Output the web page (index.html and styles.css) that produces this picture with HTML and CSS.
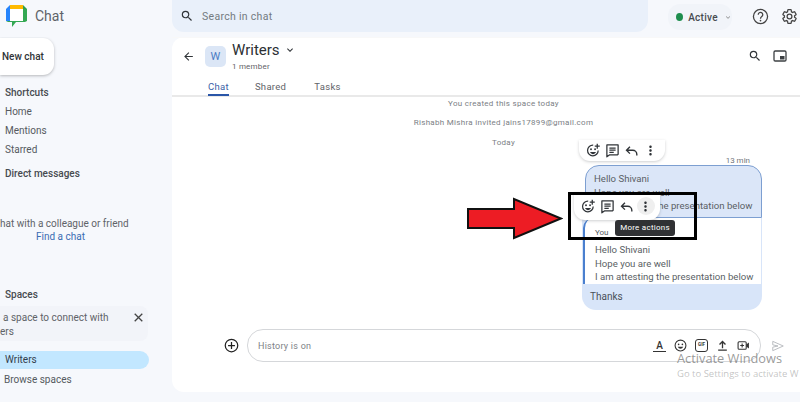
FILE: index.html
```html
<!DOCTYPE html>
<html lang="en">
<head>
    <meta charset="UTF-8">
    <title>Chat</title>
    <link rel="stylesheet" href="styles.css">
</head>
<body>
    <!-- Shared icons -->
    <svg class="sprite" width="0" height="0">
        <symbol id="i-search" viewBox="0 0 24 24"><path d="M15.5 14h-.79l-.28-.27A6.471 6.471 0 0 0 16 9.5 6.5 6.5 0 1 0 9.5 16c1.61 0 3.09-.59 4.23-1.57l.27.28v.79l5 4.99L20.49 19l-4.99-5zm-6 0C7.01 14 5 11.99 5 9.5S7.01 5 9.5 5 14 7.01 14 9.5 11.99 14 9.5 14z"/></symbol>
        <symbol id="i-chevron" viewBox="0 0 24 24"><path d="M7.41 8.59 12 13.17l4.59-4.58L18 10l-6 6-6-6z"/></symbol>
        <symbol id="i-react" viewBox="0 0 24 24"><path d="M19.500 12a8.500 8.500 0 1 1-8-8.500" fill="none" stroke="currentColor" stroke-width="2"/><circle cx="8" cy="10" r="1.500"/><circle cx="14.500" cy="10" r="1.500"/><path d="M6.500 14.500c1 2.200 2.800 3.300 4.700 3.300s3.700-1.100 4.700-3.300z"/><path d="M19 1v3h3v2h-3v3h-2V6h-3V4h3V1z"/></symbol>
        <symbol id="i-thread" viewBox="0 0 24 24"><path d="M3 3h18v15l-1 1H7l-4 3z" fill="none" stroke="currentColor" stroke-width="2" stroke-linejoin="round"/><path d="M7 7h10v2H7zM7 10.500h10v2H7zM7 14h7v2H7z"/></symbol>
        <symbol id="i-reply" viewBox="0 0 24 24"><path d="M9.500 6 4 11.500 9.500 17M4 11.500h10a6.500 6.500 0 0 1 6.500 6.500v2" fill="none" stroke="currentColor" stroke-width="2.200"/></symbol>
        <symbol id="i-more" viewBox="0 0 24 24"><path d="M12 8c1.100 0 2-.9 2-2s-.9-2-2-2-2 .9-2 2 .9 2 2 2zm0 2c-1.100 0-2 .9-2 2s.9 2 2 2 2-.9 2-2-.9-2-2-2zm0 6c-1.100 0-2 .9-2 2s.9 2 2 2 2-.9 2-2-.9-2-2-2z"/></symbol>
    </svg>

    <header class="topbar">
        <div class="brand">
            <svg class="logo" viewBox="0 0 21 22">
                <path d="M0 4 4 0v16H0z" fill="#2684fc"/>
                <path d="M4 0h13v4H4z" fill="#ffba00"/>
                <path d="M17 0l4 4v4h-4z" fill="#2f9e4f"/>
                <path d="M17 4h4v12l-2 1H10l-4 5v-5H2L0 16h17z" fill="#34a853"/>
                <path d="M4 4h13v12H4z" fill="#fff"/>
            </svg>
            <span class="brand-name">Chat</span>
        </div>
        <div class="search">
            <svg class="icon-search"><use href="#i-search"/></svg>
            <span>Search in chat</span>
        </div>
        <div class="status">
            <span class="dot"></span>
            <span>Active</span>
            <svg class="status-caret"><use href="#i-chevron"/></svg>
        </div>
        <svg class="top-icon" viewBox="0 0 24 24">
            <circle cx="12" cy="12" r="10" fill="none" stroke="#444" stroke-width="1.800"/>
            <path d="M8.800 9.500a3.200 3.200 0 1 1 5 2.600c-1.200.9-1.800 1.400-1.800 3" fill="none" stroke="#444" stroke-width="1.800"/>
            <circle cx="12" cy="17.800" r="1.200" fill="#444"/>
        </svg>
        <svg class="top-icon gear" viewBox="0 0 24 24">
            <path d="M19.140 12.940c.04-.3.06-.61.06-.94 0-.32-.02-.64-.07-.94l2.030-1.580c.18-.14.23-.41.12-.61l-1.920-3.320c-.12-.22-.37-.29-.59-.22l-2.390.96c-.5-.38-1.030-.7-1.620-.94l-.36-2.540c-.04-.24-.24-.41-.48-.41h-3.840c-.24 0-.43.17-.47.41l-.36 2.540c-.59.24-1.130.57-1.620.94l-2.390-.96c-.22-.08-.47 0-.59.22L2.740 8.870c-.12.21-.08.47.12.61l2.030 1.580c-.05.3-.09.63-.09.94s.02.64.07.94l-2.030 1.580c-.18.14-.23.41-.12.61l1.920 3.320c.12.22.37.29.59.22l2.390-.96c.5.38 1.030.7 1.620.94l.36 2.540c.05.24.24.41.48.41h3.840c.24 0 .44-.17.47-.41l.36-2.540c.59-.24 1.130-.56 1.620-.94l2.390.96c.22.08.47 0 .59-.22l1.920-3.320c.12-.22.07-.47-.12-.61l-2.010-1.580z" fill="none" stroke="#444" stroke-width="1.800"/>
            <circle cx="12" cy="12" r="3.400" fill="none" stroke="#444" stroke-width="1.800"/>
        </svg>
    </header>

    <div class="layout">
        <!-- Sidebar, the screenshot is cropped at its left edge -->
        <aside class="sidebar">
            <button class="new-chat">New chat</button>
            <h2 class="side-title first">Shortcuts</h2>
            <a class="side-link">Home</a>
            <a class="side-link">Mentions</a>
            <a class="side-link">Starred</a>
            <h2 class="side-title dm">Direct messages</h2>
            <div class="dm-empty">
                <p>hat with a colleague or friend</p>
                <p class="find">Find a chat</p>
            </div>
            <h2 class="side-title spaces">Spaces</h2>
            <div class="notice">
                <p class="notice-line">a space to connect with</p>
                <p class="notice-end">ers</p>
                <svg class="notice-close" viewBox="0 0 24 24"><path d="M5 5l14 14M19 5 5 19" stroke="#444" stroke-width="2.400" fill="none"/></svg>
            </div>
            <a class="space-row selected">Writers</a>
            <a class="space-row">Browse spaces</a>
        </aside>

        <main class="panel">
            <div class="chat-head">
                <svg class="back" viewBox="0 0 24 24"><path d="M20 11H7.830l5.590-5.590L12 4l-8 8 8 8 1.410-1.410L7.830 13H20v-2z"/></svg>
                <div class="avatar">W</div>
                <div class="head-text">
                    <div class="room">Writers <svg class="room-caret"><use href="#i-chevron"/></svg></div>
                    <div class="members">1 member</div>
                </div>
                <svg class="head-search"><use href="#i-search"/></svg>
                <svg class="pip" viewBox="0 0 14 12"><rect x="1" y="1" width="12" height="10" rx="1.200" fill="none" stroke="#3c4043" stroke-width="1.300"/><rect x="7" y="6" width="4.500" height="3.500" fill="#3c4043"/></svg>
            </div>
            <nav class="tabs">
                <a class="tab active">Chat</a>
                <a class="tab">Shared</a>
                <a class="tab">Tasks</a>
            </nav>

            <section class="thread">
                <p class="sys">You created this space today</p>
                <p class="sys invited">Rishabh Mishra invited jains17899@gmail.com</p>
                <p class="sys day">Today</p>

                <div class="messages">
                    <div class="toolbar tb-back">
                        <svg><use href="#i-react"/></svg>
                        <svg><use href="#i-thread"/></svg>
                        <svg><use href="#i-reply"/></svg>
                        <span class="more-slot"><svg><use href="#i-more"/></svg></span>
                    </div>
                    <div class="time">13 min</div>
                    <div class="bubble original">
                        <p>Hello Shivani</p>
                        <p>Hope you are well</p>
                        <p>I am attesting the presentation below</p>
                    </div>
                    <div class="quote-card">
                        <div class="quote">
                            <div class="you">You</div>
                            <p>Hello Shivani</p>
                            <p>Hope you are well</p>
                            <p>I am attesting the presentation below</p>
                        </div>
                        <div class="reply-text">Thanks</div>
                    </div>
                    <div class="toolbar tb-front">
                        <svg><use href="#i-react"/></svg>
                        <svg><use href="#i-thread"/></svg>
                        <svg><use href="#i-reply"/></svg>
                        <span class="more-slot hovered"><svg><use href="#i-more"/></svg></span>
                    </div>
                    <div class="tooltip">More actions</div>
                </div>
            </section>

            <div class="composer">
                <svg class="add" viewBox="0 0 24 24"><circle cx="12" cy="12" r="10" fill="none" stroke="#222" stroke-width="2"/><path d="M12 6.500v11M6.500 12h11" stroke="#222" stroke-width="2"/></svg>
                <div class="input">
                    <span class="placeholder">History is on</span>
                    <div class="input-icons">
                        <span class="format">A</span>
                        <svg viewBox="0 0 24 24"><circle cx="12" cy="12" r="10" fill="none" stroke="#333" stroke-width="2"/><circle cx="8.500" cy="10" r="1.500" fill="#333"/><circle cx="15.500" cy="10" r="1.500" fill="#333"/><path d="M7 14.500h10c-1 2.500-3 3.500-5 3.500s-4-1-5-3.500z" fill="#333"/></svg>
                        <span class="gif">GIF</span>
                        <svg viewBox="0 0 24 24"><path d="M12 17V5M6.500 10 12 4.500 17.500 10M4 20.500h16" fill="none" stroke="#333" stroke-width="2.400"/></svg>
                        <svg viewBox="0 0 24 24"><rect x="2" y="5" width="15" height="14" rx="2" fill="none" stroke="#333" stroke-width="2"/><path d="M9.500 8.500v7M6 12h7" stroke="#333" stroke-width="2"/><path d="M17 10l5-3.500v11L17 14z" fill="#333"/></svg>
                    </div>
                </div>
                <svg class="send" viewBox="0 0 24 24"><path d="M3 4l18 8-18 8v-6l9-2-9-2z" fill="none" stroke="#b5b8bc" stroke-width="1.600" stroke-linejoin="round"/></svg>
            </div>
        </main>
    </div>

    <!-- Annotations drawn over the screenshot -->
    <div class="callout"></div>
    <svg class="arrow" viewBox="0 0 96 43"><path d="M1 12h46V2l47 19.500L47 41V31H1z" fill="#ed1c24" stroke="#111" stroke-width="2"/></svg>
    <div class="watermark">
        <div class="wm-title">Activate Windows</div>
        <div class="wm-sub">Go to Settings to activate W</div>
    </div>
</body>
</html>
```

FILE: styles.css
```css
/* Basic Reset */
* {
    margin: 0;
    padding: 0;
    box-sizing: border-box;
}

body {
    font-family: 'Roboto', 'Liberation Sans', sans-serif;
    width: 800px;
    height: 402px;
    overflow: hidden;
    position: relative;
    background: #f6f8fc;
    color: #3c4043;
    font-size: 10px;
}

.sprite {
    position: absolute;
}

/* Top Bar */
.topbar {
    display: flex;
    align-items: flex-start;
    height: 37px;
}

.brand {
    display: flex;
    align-items: center;
    gap: 8px;
    width: 172px;
    height: 32px;
    padding-left: 6px;
}

.logo {
    width: 21px;
    height: 22px;
}

.brand-name {
    font-size: 14px;
    color: #5f6368;
}

.search {
    display: flex;
    align-items: center;
    gap: 8px;
    width: 476px;
    height: 32px;
    padding-left: 8px;
    background: #e9f0fa;
    border-radius: 0 0 12px 12px;
    font-size: 10.5px;
    letter-spacing: 0.3px;
    color: #737a80;
}

.icon-search {
    width: 14px;
    height: 14px;
    fill: #303438;
}

.status {
    display: flex;
    align-items: center;
    gap: 5px;
    width: 64px;
    height: 26px;
    margin: 4px 0 0 20px;
    padding-left: 8px;
    background: #f1f4f9;
    border-radius: 12px;
    font-size: 10px;
    font-weight: 500;
    letter-spacing: 0.3px;
    color: #474b50;
}

.dot {
    width: 8px;
    height: 8px;
    border-radius: 50%;
    background: #1e8e4e;
}

.status-caret {
    width: 9px;
    height: 9px;
    fill: #777;
    margin-left: 1px;
}

.top-icon {
    width: 17px;
    height: 17px;
    margin: 8px 0 0 20px;
}

.top-icon.gear {
    margin-left: 12px;
}

/* Layout */
.layout {
    display: flex;
    height: 355px;
}

/* Sidebar */
.sidebar {
    width: 172px;
    flex-shrink: 0;
    overflow: hidden;
    font-size: 10px;
}

.new-chat {
    display: block;
    width: 54px;
    height: 37px;
    margin-top: 1px;
    padding-left: 2px;
    border: none;
    border-radius: 0 11px 11px 0;
    background: #fff;
    box-shadow: 0 1px 3px rgba(60, 64, 67, 0.35);
    font-family: inherit;
    font-size: 10px;
    font-weight: 500;
    text-align: left;
    color: #303438;
}

.side-title {
    font-size: 10px;
    font-weight: 500;
    color: #474b50;
    padding-left: 5px;
    line-height: 14px;
}

.side-title.first {
    margin-top: 11px;
}

.side-title.dm {
    margin-top: 10px;
}

.side-title.spaces {
    margin-top: 45px;
}

.side-link {
    display: block;
    padding-left: 5px;
    margin-top: 5px;
    line-height: 14px;
    color: #555a60;
}

.dm-empty {
    margin-top: 36px;
    line-height: 13px;
    color: #5f6368;
    white-space: nowrap;
}

.find {
    padding-left: 36px;
    color: #3a6cb3;
}

.notice {
    margin-top: 4px;
    width: 148px;
    height: 35px;
    padding-top: 5px;
    background: #f2f4f9;
    border-radius: 0 8px 8px 0;
    position: relative;
    line-height: 14px;
    color: #5f6368;
}

.notice-line {
    padding-left: 3px;
}

.notice-close {
    position: absolute;
    top: 5px;
    right: 3px;
    width: 13px;
    height: 13px;
}

.space-row {
    display: block;
    width: 149px;
    height: 18px;
    line-height: 18px;
    padding-left: 5px;
    margin-top: 10px;
    color: #555a60;
}

.space-row.selected {
    background: #c2e7ff;
    border-radius: 0 9px 9px 0;
    color: #33404d;
}

.space-row + .space-row {
    margin-top: 2px;
    padding-left: 4px;
}

/* Main Panel */
.panel {
    flex: 1;
    height: 355px;
    background: #fff;
    border-radius: 12px 0 0 12px;
    display: flex;
    flex-direction: column;
}

.chat-head {
    display: flex;
    align-items: flex-start;
    height: 41px;
    padding-left: 10px;
    border-top: 1px solid #f8f8f8;
}

.back {
    width: 13px;
    height: 13px;
    margin-top: 12px;
    fill: #303438;
}

.avatar {
    width: 21px;
    height: 21px;
    margin: 8px 0 0 10px;
    border-radius: 5px;
    background: #dbe6f6;
    color: #4a7cc4;
    font-size: 11px;
    line-height: 21px;
    text-align: center;
}

.head-text {
    margin-left: 6px;
}

.room {
    display: flex;
    align-items: center;
    gap: 4px;
    height: 24px;
    font-size: 15px;
    color: #2c2f33;
}

.room-caret {
    width: 12px;
    height: 12px;
    fill: #303438;
}

.members {
    font-size: 8px;
    letter-spacing: 0.2px;
    line-height: 10px;
    color: #5f6368;
}

.head-search {
    width: 14px;
    height: 14px;
    margin: 11px 0 0 auto;
    fill: #303438;
}

.pip {
    width: 14px;
    height: 12px;
    margin: 12px 13px 0 11px;
}

.tabs {
    display: flex;
    height: 19px;
    padding-left: 36px;
    gap: 26px;
    border-bottom: 2px solid #e9e9e9;
    font-size: 9.5px;
    letter-spacing: 0.3px;
    line-height: 17px;
    color: #5f6368;
}

.tab:nth-child(3) {
    margin-left: 2px;
}

.tab.active {
    color: #3a5fa8;
    height: 18px;
    border-bottom: 2px solid #2a56a8;
}

/* Thread */
.thread {
    flex: 1;
    position: relative;
    display: flex;
    flex-direction: column;
    padding-top: 1px;
}

.sys {
    padding-left: 35px;
    text-align: center;
    font-size: 8px;
    letter-spacing: 0.3px;
    line-height: 12px;
    color: #7b8085;
}

.sys.invited {
    margin-top: 7px;
}

.sys.day {
    margin-top: 8px;
}

.messages {
    position: relative;
    align-self: flex-end;
    width: 180px;
    margin-right: 38px;
    margin-top: 6px;
}

.time {
    height: 12px;
    padding-right: 12px;
    text-align: right;
    font-size: 8px;
    line-height: 12px;
    color: #70757a;
}

.messages p {
    line-height: 13.5px;
    font-size: 9.6px;
    color: #5a5f65;
    white-space: nowrap;
}

.bubble.original {
    width: 177px;
    height: 53px;
    margin: -2px 0 0 3px;
    padding: 6px 0 0 8px;
    background: #dbe6f8;
    border: 1px solid #7d9fd1;
    border-radius: 14px 14px 0 0;
}

.quote-card {
    width: 180px;
    height: 92px;
    background: #d8e5f9;
    border-radius: 0 0 14px 14px;
}

.quote {
    height: 66px;
    padding: 9px 0 0 10px;
    background: #fff;
    border-left: 2px solid #4a80cf;
    border-top-left-radius: 10px;
    margin: 0 1px;
}

.you {
    font-size: 8px;
    line-height: 12px;
    margin-bottom: 4px;
    color: #555a60;
}

.reply-text {
    padding: 7px 0 0 8px;
    color: #4a5058;
}

/* Message toolbars, they float over the bubbles */
.toolbar {
    position: absolute;
    display: flex;
    align-items: center;
    gap: 4px;
    width: 86px;
    height: 21px;
    padding-left: 7px;
    background: #fff;
    border-radius: 0 0 11px 11px;
    box-shadow: 0 1px 3px rgba(60, 64, 67, 0.25);
    color: #303438;
}

.toolbar svg {
    display: block;
    width: 15px;
    height: 15px;
    flex-shrink: 0;
    fill: #303438;
}

.tb-back {
    left: -3px;
    top: -15px;
}

.tb-front {
    left: -8px;
    top: 37px;
    height: 28px;
}

.more-slot {
    display: flex;
    align-items: center;
    justify-content: center;
    width: 18px;
    height: 18px;
    margin: 0 -1.5px;
    border-radius: 50%;
}

.more-slot.hovered {
    background: #efefef;
}

.tooltip {
    position: absolute;
    left: 33px;
    top: 65px;
    width: 60px;
    height: 16px;
    border-radius: 3px;
    background: #303134;
    color: #fff;
    font-size: 8px;
    letter-spacing: 0.25px;
    line-height: 16px;
    text-align: center;
}

/* Composer */
.composer {
    display: flex;
    align-items: center;
    height: 33px;
    margin-bottom: 30px;
    padding-left: 52px;
}

.add {
    width: 15px;
    height: 15px;
}

.input {
    display: flex;
    align-items: center;
    justify-content: space-between;
    width: 514px;
    height: 33px;
    margin-left: 8px;
    padding: 0 10px;
    border: 1px solid #d5d7da;
    border-radius: 16px;
}

.placeholder {
    font-size: 9px;
    letter-spacing: 0.25px;
    color: #7d8186;
}

.input-icons {
    display: flex;
    align-items: center;
    gap: 8px;
    color: #333;
}

.input-icons svg {
    width: 13px;
    height: 13px;
}

.format {
    width: 13px;
    border-bottom: 1.500px solid #333;
    font-size: 10px;
    font-weight: 500;
    line-height: 11px;
    text-align: center;
}

.gif {
    width: 13px;
    height: 13px;
    border: 1.200px solid #333;
    border-radius: 3px;
    font-size: 4.500px;
    font-weight: 700;
    line-height: 10.500px;
    text-align: center;
}

.send {
    width: 14px;
    height: 14px;
    margin-left: 10px;
}

/* Annotations */
.callout {
    position: absolute;
    left: 568px;
    top: 192px;
    width: 129px;
    height: 48px;
    border: 3px solid #000;
}

.arrow {
    position: absolute;
    left: 467px;
    top: 197px;
    width: 96px;
    height: 43px;
}

.watermark {
    position: absolute;
    left: 677px;
    top: 351px;
    white-space: nowrap;
}

.wm-title {
    font-family: 'Open Sans', 'Liberation Sans', sans-serif;
    font-size: 12.8px;
    line-height: 15px;
    color: rgba(120, 120, 120, 0.75);
}

.wm-sub {
    font-family: 'Open Sans', 'Liberation Sans', sans-serif;
    font-size: 9.5px;
    line-height: 14px;
    margin-top: 1px;
    color: rgba(120, 120, 120, 0.45);
}
```
